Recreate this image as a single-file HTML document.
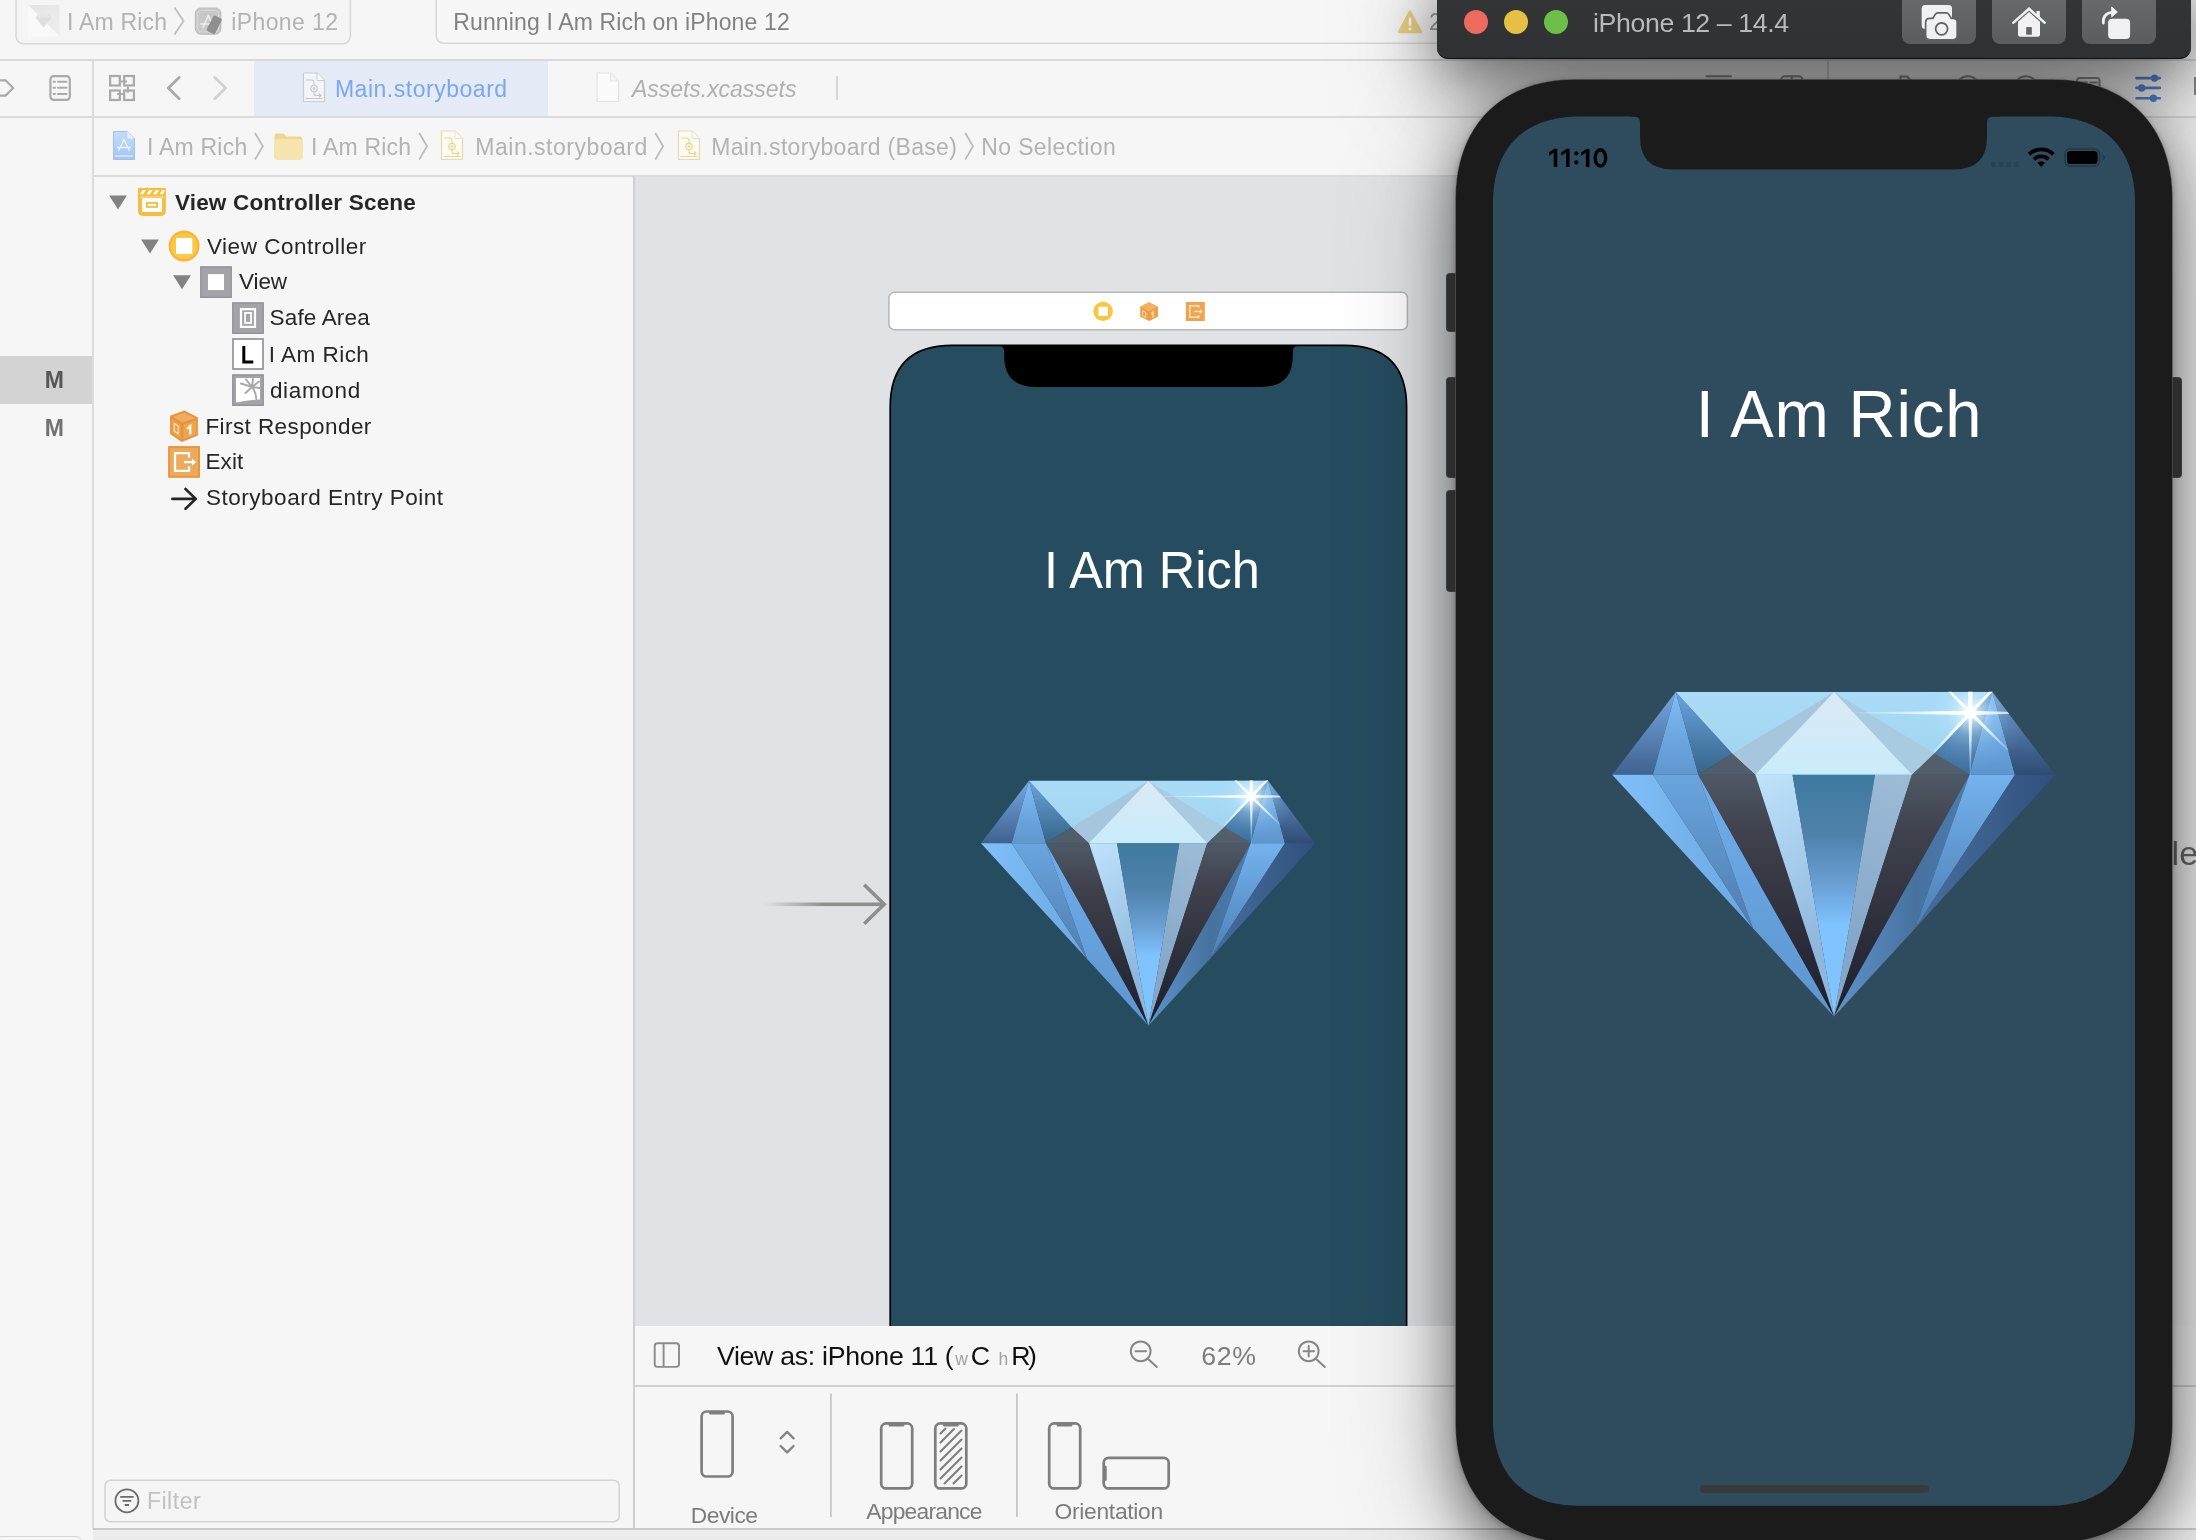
<!DOCTYPE html>
<html><head><meta charset="utf-8"><title>Xcode - I Am Rich</title>
<style>
html,body{margin:0;padding:0;background:#f6f6f6;}
body{width:2196px;height:1540px;overflow:hidden;font-family:"Liberation Sans",sans-serif;}
#root{will-change:transform;position:relative;width:2196px;height:1540px;overflow:hidden;background:#f6f6f6;}
.a{position:absolute;}
.t{position:absolute;white-space:pre;line-height:1;font-family:"Liberation Sans",sans-serif;}
svg{position:absolute;overflow:visible;}
.hl{position:absolute;background:#dadada;height:2px;}
.vl{position:absolute;background:#dadada;width:2px;}

</style></head>
<body>
<div id="root">
<!-- ===== Xcode window base ===== -->
<div class="a" style="left:0;top:0;width:2196px;height:59px;background:#f6f6f6"></div>
<!-- scheme box -->
<svg style="left:0;top:0" width="400" height="50" viewBox="0 0 400 50"><rect x="16.050" y="-10" width="334.300" height="53.850" rx="7.500" fill="#f5f5f5" stroke="#d8d8d8" stroke-width="1.500"/></svg>
<!-- status box -->
<svg style="left:430px;top:0" width="1300" height="50" viewBox="430 0 1300 50"><rect x="436.250" y="-10" width="1250" height="53.350" rx="7.500" fill="#f7f7f7" stroke="#d8d8d8" stroke-width="1.500"/></svg>
<!-- app icon (dimmed) -->
<svg style="left:28.200px;top:5px" width="32" height="32" viewBox="0 0 32 32">
  <defs><linearGradient id="ai" x1="0" y1="0" x2="1" y2="1"><stop offset="0" stop-color="#e4e4e4"/><stop offset="1" stop-color="#eeeeee"/></linearGradient></defs>
  <rect width="31.700" height="31.500" fill="#f9f9f9"/>
  <polygon points="0,0 31.700,0 31.700,31 " fill="url(#ai)"/>
  <polygon points="7.500,12.500 11,9 20,9 23.500,12.500 15.500,22.500" fill="#dfdfdf"/>
  <polygon points="11,9 20,9 21.500,12.500 9.500,12.500" fill="#e6e6e6"/>
  <polygon points="0,0 8.500,9.500 7.500,12.500 15.500,22.500 19.500,18.500 31.700,31 31.700,31.500 0,31.500" fill="#f9f9f9" fill-opacity="0"/>
</svg>
<!-- scheme chevron -->
<svg style="left:172px;top:6px" width="14" height="30" viewBox="0 0 14 30"><polyline points="2.500,1.500 11.500,15 2.500,28.500" fill="none" stroke="#bdbdbd" stroke-width="1.800"/></svg>
<!-- simulator icon -->
<svg style="left:194px;top:7px" width="32" height="32" viewBox="194 7 32 32">
  <rect x="195.300" y="8" width="25.600" height="26.200" rx="5.500" fill="#c8c8c8" stroke="#bababa" stroke-width="1"/>
  <rect x="197.600" y="10.300" width="21" height="21.600" rx="3.500" fill="none" stroke="#dadada" stroke-width="1"/>
  <path d="M203 27.500 L208.300 15.500 M213.500 27.500 L208.300 15.500 M200.500 24 H216" stroke="#ececec" stroke-width="1.600" fill="none" stroke-linecap="round"/>
  <rect x="209.600" y="16.200" width="9.400" height="17.300" rx="1.800" transform="rotate(27 214.300 24.800)" fill="#8f8f8f"/>
</svg>
<!-- warning -->
<svg style="left:1397px;top:9px" width="26" height="26" viewBox="0 0 26 26">
  <path d="M13 2.500 L24 23 H2 Z" fill="#ecd286" stroke="#ecd286" stroke-width="2.500" stroke-linejoin="round"/>
  <rect x="11.700" y="8.500" width="2.600" height="8.500" rx="1.200" fill="#fff"/><circle cx="13" cy="20" r="1.500" fill="#fff"/>
</svg>

<!-- horizontal separators -->
<div class="hl" style="left:0;top:58.500px;width:2196px;background:#d9d9d9"></div>
<div class="hl" style="left:0;top:116px;width:2196px;background:#dcdcdc"></div>
<div class="hl" style="left:93px;top:174.500px;width:2103px;background:#dcdcdc"></div>
<!-- selected tab -->
<div class="a" style="left:254px;top:60.500px;width:294px;height:55.500px;background:#e4eaf6"></div>
<!-- left strip -->
<div class="a" style="left:0;top:356px;width:92px;height:48px;background:#d3d3d3"></div>
<div class="vl" style="left:92.200px;top:60px;height:1469px;background:#dcdcdc"></div>

<!-- tab bar icons -->
<svg style="left:0;top:60px" width="260" height="56" viewBox="0 60 260 56">
  <g fill="none" stroke="#aaaaaa" stroke-width="2.200" stroke-linejoin="round" stroke-linecap="round">
    <path d="M-4 80.300 H5.500 L13.200 88 L5.500 95.600 H-4"/>
    <rect x="50.400" y="76.200" width="19.400" height="23.600" rx="3.200"/>
    <path d="M58 81.800 H66.500 M58 87.800 H66.500 M58 93.900 H66.500" stroke-width="2"/>
    <path d="M53.600 81.800 h1.400 M53.600 87.800 h1.400 M53.600 93.900 h1.400" stroke-width="2"/>
  </g>
  <g fill="none" stroke="#a9a9a9" stroke-width="2.200">
    <rect x="110.100" y="76" width="9.700" height="9.500"/><rect x="124.200" y="76" width="9.700" height="9.500"/>
    <rect x="110.100" y="90.500" width="9.700" height="9.500"/><rect x="124.200" y="90.500" width="9.700" height="9.500"/>
    <path d="M120.800 81.500 H127 M127.900 86.500 V92.700 M117.200 94 H123.100" stroke-width="2"/>
  </g>
  <polyline points="179.200,77.400 168.300,88 179.200,98.800" fill="none" stroke="#aaaaaa" stroke-width="2.800" stroke-linecap="round" stroke-linejoin="round"/>
  <polyline points="214.700,77.400 225.600,88 214.700,98.800" fill="none" stroke="#d2d2d2" stroke-width="2.800" stroke-linecap="round" stroke-linejoin="round"/>
</svg>
<!-- tab file icons -->
<svg style="left:302px;top:72px" width="24" height="31" viewBox="0 0 24 31">
  <path d="M1.500 1 H15 L22.500 8.500 V29.500 H1.500 Z" fill="#f3f5f9" stroke="#c9ccd2" stroke-width="1.200" stroke-linejoin="round"/>
  <path d="M15 1 V8.500 H22.500" fill="#fbfbfb" stroke="#c9ccd2" stroke-width="1" stroke-linejoin="round"/>
  <path d="M4 8 H9.500 Q12 8 12 10.500 V13" fill="none" stroke="#c3c6cc" stroke-width="1.100"/>
  <circle cx="12" cy="16.500" r="3.200" fill="none" stroke="#c3c6cc" stroke-width="1.100"/><circle cx="12" cy="16.500" r="1.200" fill="#c3c6cc"/>
  <path d="M12 20 V21.500 Q12 23.500 14 23.500 H19 M17 21.500 L19 23.500 L17 25.500 M3.500 26.500 H20.500" fill="none" stroke="#c3c6cc" stroke-width="1.100"/>
</svg>
<svg style="left:596px;top:72px" width="24" height="31" viewBox="0 0 24 31">
  <path d="M1 1 H14.500 L22.500 9 V29.500 H1 Z" fill="#fbfbfb" stroke="#e2e2e2" stroke-width="1.200" stroke-linejoin="round"/>
  <path d="M14.500 1 V9 H22.500" fill="#f4f4f4" stroke="#e2e2e2" stroke-width="1" stroke-linejoin="round"/>
</svg>
<div class="a" style="left:836px;top:75.500px;width:1.800px;height:24px;background:#d6d6d6"></div>

<!-- jump bar icons -->
<svg style="left:113px;top:131px" width="23" height="30" viewBox="0 0 23 30">
  <defs><linearGradient id="pj" x1="0" y1="0" x2="0" y2="1"><stop offset="0" stop-color="#c4dcf8"/><stop offset="1" stop-color="#a3c4f3"/></linearGradient></defs>
  <path d="M0.500 0.500 H14.500 L21.500 7.500 V28.500 H0.500 Z" fill="url(#pj)" stroke="#9fc0ee" stroke-width="1"/>
  <path d="M14.500 0.500 V7.500 H21.500 Z" fill="#e6f0fc"/>
  <path d="M5.500 20 L11 8.500 L16.500 20 M4 16.500 H18" fill="none" stroke="#e9f2fd" stroke-width="1.300"/>
  <path d="M2 25 H20" stroke="#e9f2fd" stroke-width="1.200"/>
</svg>
<svg style="left:274px;top:133px" width="29" height="27" viewBox="0 0 29 27">
  <path d="M0.500 3 Q0.500 0.500 3 0.500 H9.500 L12.500 3.500 H26 Q28.500 3.500 28.500 6 V24 Q28.500 26.500 26 26.500 H3 Q0.500 26.500 0.500 24 Z" fill="#efd791"/>
  <path d="M0.500 8 Q0.500 6 2.500 6 H26.500 Q28.500 6 28.500 8 V24 Q28.500 26.500 26 26.500 H3 Q0.500 26.500 0.500 24 Z" fill="#f6e4ae"/>
</svg>
<svg style="left:440px;top:130px" width="24" height="31" viewBox="0 0 24 31">
  <path d="M1.500 1 H15 L22.500 8.500 V29.500 H1.500 Z" fill="#fdfbf4" stroke="#ead9ab" stroke-width="1.200" stroke-linejoin="round"/>
  <path d="M15 1 V8.500 H22.500" fill="#fdfdfd" stroke="#e4e0d4" stroke-width="1" stroke-linejoin="round"/>
  <path d="M4 8 H9.500 Q12 8 12 10.500 V13" fill="none" stroke="#efd48d" stroke-width="1.200"/>
  <circle cx="12" cy="16.500" r="3.200" fill="none" stroke="#efd48d" stroke-width="1.200"/><circle cx="12" cy="16.500" r="1.200" fill="#efd48d"/>
  <path d="M12 20 V21.500 Q12 23.500 14 23.500 H19 M17 21.500 L19 23.500 L17 25.500 M3.500 26.500 H20.500" fill="none" stroke="#efd48d" stroke-width="1.200"/>
</svg>
<svg style="left:677px;top:130px" width="24" height="31" viewBox="0 0 24 31">
  <path d="M1.500 1 H15 L22.500 8.500 V29.500 H1.500 Z" fill="#fdfbf4" stroke="#ead9ab" stroke-width="1.200" stroke-linejoin="round"/>
  <path d="M15 1 V8.500 H22.500" fill="#fdfdfd" stroke="#e4e0d4" stroke-width="1" stroke-linejoin="round"/>
  <path d="M4 8 H9.500 Q12 8 12 10.500 V13" fill="none" stroke="#efd48d" stroke-width="1.200"/>
  <circle cx="12" cy="16.500" r="3.200" fill="none" stroke="#efd48d" stroke-width="1.200"/><circle cx="12" cy="16.500" r="1.200" fill="#efd48d"/>
  <path d="M12 20 V21.500 Q12 23.500 14 23.500 H19 M17 21.500 L19 23.500 L17 25.500 M3.500 26.500 H20.500" fill="none" stroke="#efd48d" stroke-width="1.200"/>
</svg>
<!-- jump bar chevrons -->
<svg style="left:0;top:117px" width="1200" height="58" viewBox="0 117 1200 58">
  <g fill="none" stroke="#bcbcbc" stroke-width="1.800">
    <polyline points="255,133 262.800,146.300 255,159.600"/>
    <polyline points="419.200,133 427,146.300 419.200,159.600"/>
    <polyline points="655.300,133 663.100,146.300 655.300,159.600"/>
    <polyline points="965.200,133 973,146.300 965.200,159.600"/>
  </g>
</svg>

<!-- inspector toolbar remnants (mostly hidden behind simulator) -->
<div class="vl" style="left:1826.500px;top:60px;height:57px;background:#d6d6d6"></div>
<svg style="left:1700px;top:70px" width="496" height="40" viewBox="1700 70 496 40">
  <g fill="none" stroke="#909090" stroke-width="2" stroke-linecap="round">
    <path d="M1706.500 76.200 H1731"/>
    <rect x="1781" y="76.200" width="21.500" height="20" rx="4"/>
    <path d="M1791.700 76.200 V96"/>
    <path d="M1900.500 100 V76.500 H1907 L1911 80.500 V100"/>
    <circle cx="1967.800" cy="88" r="11.800"/>
    <circle cx="2026" cy="88" r="11.800"/>
    <rect x="2077" y="78" width="22.500" height="20" rx="2.500"/>
    <path d="M2080 82.500 H2087 M2090.500 82.500 H2097"/>
  </g>
  <g stroke="#5585d0" stroke-width="2.600" stroke-linecap="round" fill="#5585d0">
    <path d="M2136.500 78.100 H2159.800 M2136.500 87.900 H2159.800 M2136.500 98.200 H2159.800"/>
    <circle cx="2154.600" cy="78.100" r="2.400"/><circle cx="2141.700" cy="87.900" r="2.400"/><circle cx="2153.400" cy="98.200" r="2.400"/>
  </g>
</svg>
<div class="a" style="left:2193.500px;top:76.500px;width:3px;height:18.500px;background:#8c8c8c"></div>

<!-- ===== diamond symbol ===== -->
<svg width="0" height="0" style="left:0;top:0">
  <defs>
    <linearGradient id="dFL" x1="0" y1="196" x2="0" y2="497" gradientUnits="userSpaceOnUse"><stop offset="0" stop-color="#76a6df"/><stop offset="1" stop-color="#3f6290"/></linearGradient>
    <linearGradient id="dL2" x1="0" y1="196" x2="0" y2="497" gradientUnits="userSpaceOnUse"><stop offset="0" stop-color="#7fbcf7"/><stop offset="1" stop-color="#5f96cd"/></linearGradient>
    <linearGradient id="dL3" x1="0" y1="196" x2="0" y2="497" gradientUnits="userSpaceOnUse"><stop offset="0" stop-color="#6ba3dd"/><stop offset="1" stop-color="#356489"/></linearGradient>
    <linearGradient id="dTab" x1="0" y1="196" x2="0" y2="497" gradientUnits="userSpaceOnUse"><stop offset="0" stop-color="#aadcf7"/><stop offset="1" stop-color="#9fd3ec"/></linearGradient>
    <linearGradient id="dKite" x1="0" y1="196" x2="0" y2="497" gradientUnits="userSpaceOnUse"><stop offset="0" stop-color="#dce9f5"/><stop offset="1" stop-color="#c9ecfb"/></linearGradient>
    <linearGradient id="dR3" x1="0" y1="196" x2="0" y2="497" gradientUnits="userSpaceOnUse"><stop offset="0" stop-color="#5f97cf"/><stop offset="1" stop-color="#3d6d98"/></linearGradient>
    <linearGradient id="dR2" x1="0" y1="196" x2="0" y2="497" gradientUnits="userSpaceOnUse"><stop offset="0" stop-color="#7bb5ee"/><stop offset="1" stop-color="#5d95cf"/></linearGradient>
    <linearGradient id="dFR" x1="0" y1="196" x2="0" y2="497" gradientUnits="userSpaceOnUse"><stop offset="0" stop-color="#6796cc"/><stop offset="1" stop-color="#2f4b74"/></linearGradient>
    <linearGradient id="dDk" x1="0" y1="420" x2="0" y2="1375" gradientUnits="userSpaceOnUse"><stop offset="0" stop-color="#55626f"/><stop offset="0.300" stop-color="#3f414d"/><stop offset="1" stop-color="#1d1e2b"/></linearGradient>
    <linearGradient id="dCen" x1="0" y1="497" x2="0" y2="1375" gradientUnits="userSpaceOnUse"><stop offset="0" stop-color="#3f7a9f"/><stop offset="0.250" stop-color="#4f82ab"/><stop offset="0.450" stop-color="#6a9fd3"/><stop offset="0.620" stop-color="#7fc3ff"/><stop offset="1" stop-color="#80c4ff"/></linearGradient>
    <linearGradient id="dPL" x1="717" y1="497" x2="1003" y2="1100" gradientUnits="userSpaceOnUse"><stop offset="0" stop-color="#bfe3fb"/><stop offset="1" stop-color="#8fb6dc"/></linearGradient>
    <linearGradient id="dPR" x1="1286" y1="497" x2="1003" y2="1100" gradientUnits="userSpaceOnUse"><stop offset="0" stop-color="#9cbcd6"/><stop offset="1" stop-color="#86a6c9"/></linearGradient>
    <linearGradient id="dOL" x1="197" y1="0" x2="720" y2="0" gradientUnits="userSpaceOnUse"><stop offset="0" stop-color="#80c0fa"/><stop offset="1" stop-color="#6ca6e0"/></linearGradient>
    <linearGradient id="dOL2" x1="0" y1="497" x2="0" y2="1055" gradientUnits="userSpaceOnUse"><stop offset="0" stop-color="#6aa5df"/><stop offset="1" stop-color="#4f7db0"/></linearGradient>
    <linearGradient id="dOL3" x1="0" y1="497" x2="0" y2="1375" gradientUnits="userSpaceOnUse"><stop offset="0" stop-color="#6fadea"/><stop offset="1" stop-color="#5d95cf"/></linearGradient>
    <linearGradient id="dOR" x1="1300" y1="0" x2="1805" y2="0" gradientUnits="userSpaceOnUse"><stop offset="0" stop-color="#486f9f"/><stop offset="1" stop-color="#30507c"/></linearGradient>
    <linearGradient id="dOR2" x1="0" y1="497" x2="0" y2="1055" gradientUnits="userSpaceOnUse"><stop offset="0" stop-color="#74b2ee"/><stop offset="1" stop-color="#4c7fb4"/></linearGradient>
    <linearGradient id="dOR3" x1="1003" y1="0" x2="1495" y2="0" gradientUnits="userSpaceOnUse"><stop offset="0" stop-color="#5e93cb"/><stop offset="0.600" stop-color="#47729f"/><stop offset="1" stop-color="#4b7cb0"/></linearGradient>
    <radialGradient id="dGlow" cx="1498" cy="272" r="210" gradientUnits="userSpaceOnUse"><stop offset="0" stop-color="#ffffff" stop-opacity="0.950"/><stop offset="0.150" stop-color="#e8f8ff" stop-opacity="0.700"/><stop offset="0.400" stop-color="#bfe8ff" stop-opacity="0.300"/><stop offset="0.700" stop-color="#a0d8ff" stop-opacity="0.100"/><stop offset="1" stop-color="#8fd0ff" stop-opacity="0"/></radialGradient>
    <linearGradient id="dStH" x1="1000" y1="0" x2="1660" y2="0" gradientUnits="userSpaceOnUse"><stop offset="0" stop-color="#dff6ff" stop-opacity="0"/><stop offset="0.250" stop-color="#dff6ff" stop-opacity="0.550"/><stop offset="0.600" stop-color="#fff" stop-opacity="0.950"/><stop offset="0.760" stop-color="#fff" stop-opacity="1"/><stop offset="1" stop-color="#d8f4ff" stop-opacity="0.750"/></linearGradient>
    <linearGradient id="dStV" x1="0" y1="188" x2="0" y2="520" gradientUnits="userSpaceOnUse"><stop offset="0" stop-color="#fff" stop-opacity="0.900"/><stop offset="0.250" stop-color="#fff" stop-opacity="1"/><stop offset="0.550" stop-color="#dff4ff" stop-opacity="0.850"/><stop offset="1" stop-color="#9fd8ff" stop-opacity="0.100"/></linearGradient>
    <linearGradient id="dRay1" x1="1417" y1="195" x2="1634" y2="406" gradientUnits="userSpaceOnUse"><stop offset="0" stop-color="#fff" stop-opacity="0.950"/><stop offset="0.370" stop-color="#fff" stop-opacity="1"/><stop offset="0.700" stop-color="#e6f7ff" stop-opacity="0.850"/><stop offset="1" stop-color="#bfe6ff" stop-opacity="0.350"/></linearGradient>
    <linearGradient id="dRay2" x1="1578" y1="195" x2="1366" y2="416" gradientUnits="userSpaceOnUse"><stop offset="0" stop-color="#fff" stop-opacity="0.950"/><stop offset="0.360" stop-color="#fff" stop-opacity="1"/><stop offset="0.750" stop-color="#e6f7ff" stop-opacity="0.900"/><stop offset="1" stop-color="#c6eaff" stop-opacity="0.550"/></linearGradient>
    <radialGradient id="dCore" cx="1498" cy="272" r="27" gradientUnits="userSpaceOnUse"><stop offset="0" stop-color="#fff" stop-opacity="1"/><stop offset="0.550" stop-color="#fff" stop-opacity="0.950"/><stop offset="1" stop-color="#fff" stop-opacity="0"/></radialGradient>
    <filter id="dBlur" x="-5%" y="-5%" width="110%" height="110%"><feGaussianBlur stdDeviation="2.200"/></filter>
    <clipPath id="dClip"><polygon points="428,194 1578,194 1805,497 1003,1375 197,497"/></clipPath>
    <symbol id="diamond" viewBox="0 0 2021 1540">
      <g stroke-linejoin="round">
      <!-- crown -->
      <polygon points="197,497 428,196 345,497" fill="url(#dFL)"/>
      <polygon points="428,196 345,497 510,497" fill="url(#dL2)"/>
      <polygon points="428,196 510,497 633,420" fill="url(#dL3)"/>
      <polygon points="428,196 1578,196 1367,420 1286,497 717,497 633,420" fill="url(#dTab)"/>
      <polygon points="1003,197 633,420 717,497" fill="#a6c6de"/>
      <polygon points="1003,197 1367,420 1286,497" fill="#a9cbe2"/>
      <polygon points="1003,197 717,497 1286,497" fill="url(#dKite)"/>
      <polygon points="1578,196 1367,420 1495,497" fill="url(#dR3)"/>
      <polygon points="1578,196 1495,497 1660,497" fill="url(#dR2)"/>
      <polygon points="1578,196 1660,497 1805,497" fill="url(#dFR)"/>
      <polygon points="633,420 510,497 717,497" fill="#515d6a"/>
      <polygon points="1367,420 1286,497 1495,497" fill="#535e6b"/>
      <!-- pavilion -->
      <polygon points="197,497 345,497 709,1055" fill="url(#dOL)"/>
      <polygon points="345,497 510,497 709,1055" fill="url(#dOL2)"/>
      <polygon points="510,497 709,1055 1003,1375" fill="url(#dOL3)"/>
      <polygon points="510,497 717,497 1003,1375" fill="url(#dDk)"/>
      <polygon points="717,497 852,497 1003,1375" fill="url(#dPL)"/>
      <polygon points="852,497 1152,497 1003,1375" fill="url(#dCen)"/>
      <polygon points="1152,497 1286,497 1003,1375" fill="url(#dPR)"/>
      <polygon points="1286,497 1495,497 1003,1375" fill="url(#dDk)"/>
      <polygon points="1495,497 1297,1055 1003,1375" fill="url(#dOR3)"/>
      <polygon points="1495,497 1660,497 1297,1055" fill="url(#dOR2)"/>
      <polygon points="1660,497 1805,497 1297,1055" fill="url(#dOR)"/>
      <!-- sparkle -->
      <g clip-path="url(#dClip)">
        <circle cx="1498" cy="272" r="210" fill="url(#dGlow)"/>
        <g filter="url(#dBlur)">
          <polygon points="1000,272 1498,264.500 1660,268.500 1660,275.500 1498,279.500" fill="url(#dStH)"/>
          <polygon points="1490,188 1506,188 1505,272 1499.500,520 1496.500,520 1491,272" fill="url(#dStV)"/>
          <polygon points="1412,188 1422,188 1503,267 1636,404 1632,408 1493,277" fill="url(#dRay1)"/>
          <polygon points="1573,188 1584,190 1503,277 1369,418 1363,412 1493,267" fill="url(#dRay2)"/>
        </g>
        <circle cx="1498" cy="272" r="27" fill="url(#dCore)"/>
      </g>
      </g>
    </symbol>
  </defs>
</svg>

<!-- ===== canvas ===== -->
<div class="a" style="left:634px;top:176.500px;width:1562px;height:1149.500px;background:#e1e2e6"></div>
<div class="vl" style="left:632.500px;top:176px;height:1353px;background:#cfcfcf"></div>
<div class="a" style="left:1828px;top:118px;width:368px;height:1412px;background:#f4f4f4"></div>
<!-- scene dock -->
<svg style="left:880px;top:285px" width="540" height="52" viewBox="880 285 540 52"><rect x="888.900" y="292.300" width="518.500" height="37.400" rx="5.500" fill="#fff" stroke="#b7b7b7" stroke-width="1.500"/></svg>
<svg style="left:1090px;top:298px" width="120" height="28" viewBox="1090 298 120 28">
  <circle cx="1103.100" cy="311.400" r="9.700" fill="#f7c740"/>
  <rect x="1098.500" y="306.800" width="9.200" height="9.200" rx="0.500" fill="#fff"/>
  <polygon points="1149,302.300 1157.800,306.800 1157.800,316.400 1149,321.100 1140.200,316.400 1140.200,306.800" fill="#ee9e44"/>
  <polygon points="1149,302.300 1157.800,306.800 1149,311.300 1140.200,306.800" fill="#f2b264"/>
  <polygon points="1149,311.300 1157.800,306.800 1157.800,316.400 1149,321.100" fill="#ef9f45"/>
  <polygon points="1142.600,310.800 1145.800,312.400 1145.800,317.600 1142.600,316" fill="none" stroke="#f9d9ae" stroke-width="1"/>
  <path d="M1151.200 314 L1153.100 312 V317.600" fill="none" stroke="#fbe6cc" stroke-width="1.300"/>
  <rect x="1185.800" y="302" width="19" height="19" fill="#efa550"/>
  <path d="M1198.600 308 V305.800 H1189.800 V317.200 H1198.600 V315" fill="none" stroke="#fbe3c4" stroke-width="1.500"/>
  <path d="M1194 311.500 H1201.500" fill="none" stroke="#fbe3c4" stroke-width="1.400"/>
  <polygon points="1199.800,309 1202.600,311.500 1199.800,314" fill="#fbe3c4"/>
</svg>
<!-- storyboard phone -->
<svg style="left:880px;top:340px" width="540" height="1000" viewBox="880 340 540 1000">
  <path d="M890.200 1450 V407.400 C890.200 366.400 911.200 345.400 952.200 345.400 H1344.600 C1385.600 345.400 1406.600 366.400 1406.600 407.400 V1450 Z" fill="#264c5f" stroke="#000" stroke-width="1.700"/>
</svg>
<svg style="left:990px;top:340px" width="320" height="50" viewBox="990 340 320 50">
  <path d="M996 346 H999 Q1004.200 346 1004.200 351.500 V356 Q1004.200 387 1036 387 H1261 Q1292.800 387 1292.800 356 V351.500 Q1292.800 346 1298 346 H1301 V345.700 H996 Z" fill="#000"/>
</svg>
<!-- entry arrow -->
<svg style="left:760px;top:880px" width="130" height="50" viewBox="760 880 130 50">
  <defs><linearGradient id="arw" x1="764" y1="0" x2="886" y2="0" gradientUnits="userSpaceOnUse"><stop offset="0" stop-color="#8e8e8e" stop-opacity="0"/><stop offset="0.500" stop-color="#8e8e8e" stop-opacity="1"/><stop offset="1" stop-color="#8e8e8e"/></linearGradient></defs>
  <rect x="764" y="902.500" width="120" height="3.600" fill="url(#arw)"/>
  <polyline points="864.200,884.800 884.200,904.300 864.200,923.800" fill="none" stroke="#8e8e8e" stroke-width="3.600" stroke-linejoin="miter"/>
</svg>
<!-- storyboard diamond -->
<svg style="left:940px;top:740px" width="420" height="320"><use href="#diamond" width="420" height="320"/></svg>

<!-- ===== document outline icons ===== -->
<svg style="left:94px;top:176px" width="400" height="350" viewBox="94 176 400 350">
  <!-- disclosure triangles -->
  <g fill="#828282">
    <polygon points="109.200,195.400 126.900,195.400 118,209.400"/>
    <polygon points="141.100,239.500 158.900,239.500 150,253.500"/>
    <polygon points="173.100,275.300 190.900,275.300 182,289.300"/>
  </g>
  <!-- scene icon -->
  <path d="M138 189 Q138 188 139 188 H164.900 Q165.900 188 165.900 189 V211 Q165.900 215.900 161 215.900 H142.900 Q138 215.900 138 211 Z" fill="#f5be40"/>
  <rect x="142" y="198" width="20" height="14" fill="#fff"/>
  <rect x="139.600" y="195.800" width="24.700" height="2.200" fill="#f8cf6a"/>
  <g fill="#fff"><polygon points="139.800,194.300 142.600,190 146,190 143.200,194.300"/><polygon points="146.400,194.300 149.200,190 152.600,190 149.800,194.300"/><polygon points="153,194.300 155.800,190 159.200,190 156.400,194.300"/><polygon points="159.600,194.300 162.400,190 164.300,190 164.300,192 162.800,194.300"/></g>
  <rect x="146.900" y="202.900" width="10.100" height="4" fill="#fff" stroke="#f5be40" stroke-width="1.900"/>
  <!-- view controller icon -->
  <circle cx="184.100" cy="246" r="14.300" fill="#f9c845" stroke="#f5b83a" stroke-width="2.400"/>
  <rect x="176" y="238" width="16.300" height="16" rx="0.800" fill="#fff"/>
  <!-- view icon -->
  <rect x="200.800" y="266.900" width="30.400" height="30.400" fill="#a3a3a8" stroke="#919196" stroke-width="1.400"/>
  <rect x="208" y="274.100" width="16" height="16" fill="#fff"/>
  <!-- safe area icon -->
  <rect x="232.800" y="302.900" width="30.400" height="30.400" fill="#a3a3a8" stroke="#919196" stroke-width="1.400"/>
  <rect x="241" y="309.200" width="14" height="17.700" fill="#a3a3a8" stroke="#fff" stroke-width="2.200"/>
  <rect x="245.100" y="312.900" width="6" height="10" fill="#a3a3a8" stroke="#fff" stroke-width="1.800"/>
  <!-- label icon -->
  <rect x="233" y="339" width="30" height="30" fill="#fff" stroke="#98989d" stroke-width="1.800"/>
  <path d="M243.800 346 V362 H253.300" fill="none" stroke="#000" stroke-width="3"/>
  <!-- image view icon -->
  <rect x="232.800" y="374.900" width="30.400" height="30.400" fill="#a3a3a8" stroke="#919196" stroke-width="1.400"/>
  <path d="M236 378 H260 V399.500 Q248 400 236 402.500 Z" fill="#fff"/>
  <g stroke="#a8a8ad" stroke-width="2" stroke-linecap="round" fill="none">
    <path d="M252 387 L241 383.500 M252 387 L246 379.500 M252 387 L253 379 M252 387 L259 381.500 M252 387 L260 388 M252 387 L245.500 393 M252 387 Q256 392 256.500 400"/>
  </g>
  <!-- first responder cube -->
  <polygon points="184.500,410.600 197.900,417.600 197.900,435.600 181.800,442 170.100,434 170.100,415.700" fill="#e8933a"/>
  <polygon points="184.300,412.700 195.300,418.300 182.300,422.600 173.200,416.800" fill="#f0ae62"/>
  <polygon points="171.800,418.300 181,424.600 181,439.300 171.800,433.200" fill="#ed9f49"/>
  <polygon points="183.500,424.600 196.200,420.200 196.200,434.400 183.500,439.400" fill="#eea552"/>
  <polygon points="174.300,423.600 178.300,426.300 178.300,433.800 174.300,431.100" fill="none" stroke="#fbe5c8" stroke-width="1.200"/>
  <path d="M187.200 428.800 L190.300 426 V434.600" fill="none" stroke="#fff" stroke-width="2"/>
  <!-- exit icon -->
  <rect x="168.100" y="446.100" width="31.900" height="31.700" fill="#e8953d"/>
  <rect x="170.100" y="448.100" width="27.900" height="27.700" fill="#eeaa5c"/>
  <path d="M189 457.500 V453.200 H175 V470.900 H189 V466.500" fill="none" stroke="#fff" stroke-width="2.300"/>
  <path d="M184 462.100 H193" fill="none" stroke="#fff" stroke-width="2.300"/>
  <polygon points="192,458.400 196,462.100 192,465.800" fill="#fff"/>
  <!-- entry point arrow -->
  <path d="M172.400 498.900 H195.500 M185.500 489 L195.800 498.900 L185.500 508.800" fill="none" stroke="#262626" stroke-width="2.600" stroke-linecap="round" stroke-linejoin="round"/>
</svg>
<!-- filter box -->
<svg style="left:100px;top:1475px" width="530" height="52" viewBox="100 1475 530 52"><rect x="104.950" y="1480.250" width="514.300" height="41.500" rx="5.500" fill="#f5f5f5" stroke="#d3d3d3" stroke-width="1.500"/></svg>
<svg style="left:112px;top:1486px" width="30" height="30" viewBox="112 1486 30 30">
  <circle cx="126.900" cy="1500.800" r="11.500" fill="none" stroke="#6b6b6b" stroke-width="1.800"/>
  <path d="M120.200 1496.800 H133.600 M122.500 1500.900 H131.300 M124.700 1505 H129.100" stroke="#6b6b6b" stroke-width="1.800" fill="none"/>
</svg>

<!-- ===== canvas bottom bars ===== -->
<div class="a" style="left:634.500px;top:1326px;width:1562px;height:202px;background:#f6f6f6"></div>
<div class="hl" style="left:634.500px;top:1384.500px;width:1562px;background:#d2d2d2"></div>
<div class="hl" style="left:93px;top:1527.500px;width:2103px;background:#c9c9c9;height:2.200px"></div>
<div class="a" style="left:93px;top:1529.700px;width:2103px;height:11px;background:#ececec"></div>
<div class="a" style="left:-4px;top:1535.500px;width:84px;height:10px;border:1.500px solid #d6d6d6;border-radius:6px"></div>
<svg style="left:634px;top:1326px" width="820" height="204" viewBox="634 1326 820 204">
  <!-- sidebar toggle -->
  <g fill="none" stroke="#8b8b8b" stroke-width="1.900">
    <rect x="654.700" y="1343.300" width="24.300" height="23.600" rx="2.800"/>
    <path d="M663.600 1343.300 V1366.900"/>
  </g>
  <!-- zoom icons -->
  <g fill="none" stroke="#868686" stroke-width="2" stroke-linecap="round">
    <circle cx="1140.700" cy="1351.300" r="9.900"/><path d="M1147.900 1358.700 L1156.800 1367"/><path d="M1135.500 1351.300 H1146"/>
    <circle cx="1308.700" cy="1351.300" r="9.900"/><path d="M1315.900 1358.700 L1324.800 1367"/><path d="M1303.500 1351.300 H1314 M1308.700 1346 V1356.600"/>
  </g>
  <!-- dividers -->
  <rect x="830" y="1393.600" width="1.800" height="123.400" fill="#c6c6c6"/>
  <rect x="1016" y="1393.600" width="1.800" height="123.400" fill="#c6c6c6"/>
  <!-- device phones -->
  <g fill="none" stroke="#7e7e7e" stroke-width="2.700">
    <rect x="701.600" y="1411.500" width="31" height="65" rx="5"/>
    <rect x="881.200" y="1423.400" width="31" height="65" rx="5"/>
    <rect x="935.300" y="1423.400" width="31" height="65" rx="5"/>
    <rect x="1049.200" y="1423.400" width="31" height="65" rx="5"/>
    <rect x="1103.700" y="1457.800" width="65" height="30.600" rx="5"/>
  </g>
  <g stroke="#7e7e7e" stroke-width="3" stroke-linecap="round">
    <path d="M710.500 1413 H723.500 M890 1425 H903 M944.300 1425 H957.300 M1058 1425 H1071 M1105.200 1467 V1479.500"/>
  </g>
  <!-- hatching -->
  <g stroke="#7e7e7e" stroke-width="2.100" stroke-linecap="round">
    <path d="M940.500 1433.500 L945.500 1428.500 M940.500 1442.500 L954 1429 M940.500 1451.500 L961.500 1430.500 M940.500 1460.500 L961.500 1439.500 M940.500 1469.500 L961.500 1448.500 M940.500 1478.500 L961.500 1457.500 M944.500 1483.500 L961.500 1466.500 M953.500 1483.500 L961.500 1475.500"/>
  </g>
  <!-- up/down chevrons -->
  <g fill="none" stroke="#858585" stroke-width="2.400" stroke-linecap="round" stroke-linejoin="round">
    <polyline points="780.600,1438.300 787.100,1431.900 793.600,1438.300"/>
    <polyline points="780.600,1446 787.100,1452.400 793.600,1446"/>
  </g>
</svg>
<span class="t" style="left:66.97px;top:10.53px;font-size:23px;color:#b3b3b3;letter-spacing:0.205px;">I Am Rich</span>
<span class="t" style="left:231.34px;top:10.53px;font-size:23px;color:#b3b3b3;letter-spacing:0.376px;">iPhone 12</span>
<span class="t" style="left:453.22px;top:11.23px;font-size:23px;color:#828282;letter-spacing:0.139px;">Running I Am Rich on iPhone 12</span>
<span class="t" style="left:1428.94px;top:11.23px;font-size:23px;color:#9a9a9a;">2</span>
<span class="t" style="left:334.92px;top:77.63px;font-size:23px;color:#7aa8ef;letter-spacing:0.525px;">Main.storyboard</span>
<span class="t" style="left:631.96px;top:77.63px;font-size:23px;color:#b0b0b0;letter-spacing:-0.032px;font-style:italic;">Assets.xcassets</span>
<span class="t" style="left:147.12px;top:135.63px;font-size:23px;color:#b3b3b3;letter-spacing:0.209px;">I Am Rich</span>
<span class="t" style="left:311.12px;top:135.63px;font-size:23px;color:#b3b3b3;letter-spacing:0.194px;">I Am Rich</span>
<span class="t" style="left:475.34px;top:135.63px;font-size:23px;color:#b3b3b3;letter-spacing:0.500px;">Main.storyboard</span>
<span class="t" style="left:711.28px;top:135.63px;font-size:23px;color:#b3b3b3;letter-spacing:0.313px;">Main.storyboard (Base)</span>
<span class="t" style="left:981.22px;top:135.63px;font-size:23px;color:#b3b3b3;letter-spacing:0.377px;">No Selection</span>
<span class="t" style="left:174.93px;top:191.55px;font-size:22.5px;color:#262626;letter-spacing:0.185px;font-weight:700;">View Controller Scene</span>
<span class="t" style="left:207.01px;top:235.65px;font-size:22.5px;color:#262626;letter-spacing:0.508px;">View Controller</span>
<span class="t" style="left:239.07px;top:271.35px;font-size:22.5px;color:#262626;letter-spacing:-0.138px;">View</span>
<span class="t" style="left:269.55px;top:307.35px;font-size:22.5px;color:#262626;letter-spacing:0.170px;">Safe Area</span>
<span class="t" style="left:268.74px;top:343.55px;font-size:22.5px;color:#262626;letter-spacing:0.485px;">I Am Rich</span>
<span class="t" style="left:269.92px;top:379.55px;font-size:22.5px;color:#262626;letter-spacing:0.657px;">diamond</span>
<span class="t" style="left:205.43px;top:415.55px;font-size:22.5px;color:#262626;letter-spacing:0.417px;">First Responder</span>
<span class="t" style="left:205.43px;top:451.25px;font-size:22.5px;color:#262626;letter-spacing:0.129px;">Exit</span>
<span class="t" style="left:206.07px;top:487.35px;font-size:22.5px;color:#262626;letter-spacing:0.505px;">Storyboard Entry Point</span>
<span class="t" style="left:44.86px;top:369.23px;font-size:23px;color:#565656;font-weight:700;">M</span>
<span class="t" style="left:44.86px;top:417.43px;font-size:23px;color:#727272;font-weight:700;">M</span>
<span class="t" style="left:146.92px;top:1490.43px;font-size:23px;color:#c2c2c2;letter-spacing:0.523px;">Filter</span>
<span class="t" style="left:716.88px;top:1343.00px;font-size:26.7px;color:#111;letter-spacing:-0.287px;">View as: iPhone 11 (</span>
<span class="t" style="left:955.23px;top:1350.79px;font-size:17.5px;color:#a2a2a2;">w</span>
<span class="t" style="left:970.68px;top:1343.00px;font-size:26.7px;color:#111;">C</span>
<span class="t" style="left:998.41px;top:1350.79px;font-size:17.5px;color:#a2a2a2;">h</span>
<span class="t" style="left:1011.30px;top:1343.00px;font-size:26.7px;color:#111;letter-spacing:-2.603px;">R)</span>
<span class="t" style="left:1201.32px;top:1343.00px;font-size:26.7px;color:#7d7d7d;letter-spacing:0.592px;">62%</span>
<span class="t" style="left:690.80px;top:1503.90px;font-size:22.8px;color:#7c7c7c;letter-spacing:-0.491px;">Device</span>
<span class="t" style="left:866.28px;top:1500.20px;font-size:22.8px;color:#7c7c7c;letter-spacing:-0.753px;">Appearance</span>
<span class="t" style="left:1054.56px;top:1500.20px;font-size:22.8px;color:#7c7c7c;letter-spacing:-0.289px;">Orientation</span>
<span class="t" style="left:2171.62px;top:836.02px;font-size:34px;color:#6a6a6a;">le</span>
<span class="t" style="left:1044.06px;top:546.05px;font-size:50.5px;color:#fff;letter-spacing:-0.050px;transform:scaleY(1.015);transform-origin:0 84.65%;">I Am Rich</span>

<!-- ===== iOS Simulator window ===== -->
<!-- soft window shadow -->
<div class="a" style="left:1466px;top:90px;width:696px;height:1443px;border-radius:100px;box-shadow:0 20px 60px 10px rgba(0,0,0,0.50), 0 22px 120px 10px rgba(0,0,0,0.27), 0 1px 6px 10px rgba(0,0,0,0.28);"></div>
<div class="a" style="left:1441px;top:-20px;width:745px;height:74px;border-radius:8px;box-shadow:0 20px 60px 4px rgba(0,0,0,0.50), 0 22px 120px 4px rgba(0,0,0,0.27);"></div>
<!-- side buttons -->
<div class="a" style="left:1445.500px;top:273px;width:14px;height:58.500px;border-radius:3.500px;background:#2d2d2d;border:1px solid #3b3b3b;box-sizing:border-box"></div>
<div class="a" style="left:1445.500px;top:376.800px;width:14px;height:101.500px;border-radius:3.500px;background:#2d2d2d;border:1px solid #3b3b3b;box-sizing:border-box"></div>
<div class="a" style="left:1445.500px;top:490px;width:14px;height:102px;border-radius:3.500px;background:#2d2d2d;border:1px solid #3b3b3b;box-sizing:border-box"></div>
<div class="a" style="left:2168px;top:377px;width:13.600px;height:101.300px;border-radius:3.500px;background:#2d2d2d;border:1px solid #3b3b3b;box-sizing:border-box"></div>
<!-- phone body -->
<svg style="left:1440px;top:70px" width="750" height="1480" viewBox="1440 70 750 1480">
  <path d="M1455.500 199.300 C1455.500 125.300 1501.500 79.300 1575.500 79.300 H2052.500 C2126.500 79.300 2172.500 125.300 2172.500 199.300 V1423 C2172.500 1497 2126.500 1543 2052.500 1543 H1575.500 C1501.500 1543 1455.500 1497 1455.500 1423 Z" fill="#1b1b1b" stroke="#8a8a8a" stroke-opacity="0.35" stroke-width="1"/>
  <path d="M1493 202.500 C1493 147.800 1524.300 116.500 1579 116.500 H2049 C2103.700 116.500 2135 147.800 2135 202.500 V1419.700 C2135 1474.400 2103.700 1505.700 2049 1505.700 H1579 C1524.300 1505.700 1493 1474.400 1493 1419.700 Z" fill="#2f4c5e"/>
</svg>
<!-- notch -->
<svg style="left:1630px;top:110px" width="370" height="64" viewBox="1630 110 370 64">
  <path d="M1630 110 H2000 V116.500 H1993 Q1987 116.500 1987 122.500 V137 Q1987 169.500 1954 169.500 H1673 Q1640 169.500 1640 137 V122.500 Q1640 116.500 1634 116.500 H1630 Z" fill="#1b1b1b"/>
</svg>
<!-- status icons -->
<svg style="left:1985px;top:140px" width="130" height="34" viewBox="1985 140 130 34">
  <g fill="#294252"><rect x="1991" y="161.800" width="4.800" height="5.100" rx="1.300"/><rect x="1998.500" y="161.800" width="4.800" height="5.100" rx="1.300"/><rect x="2006" y="161.800" width="4.800" height="5.100" rx="1.300"/><rect x="2013.800" y="161.800" width="4.900" height="5.100" rx="1.300"/></g>
  <g fill="none" stroke="#000" stroke-linecap="butt">
    <path d="M2029.040 154.310 A17.500 17.500 0 0 1 2053.360 154.310" stroke-width="3.800"/>
    <path d="M2033.870 159.310 A10.550 10.550 0 0 1 2048.530 159.310" stroke-width="3.700"/>
  </g>
  <path d="M2041.200 166.900 L2037.240 162.800 A5.700 5.700 0 0 1 2045.160 162.800 Z" fill="#000"/>
  <rect x="2065.100" y="148.900" width="34.500" height="17.200" rx="4.800" fill="none" stroke="#223a4a" stroke-width="1.700"/>
  <rect x="2067" y="151" width="30.600" height="13" rx="3.300" fill="#000"/>
  <path d="M2102.700 154.800 Q2105 155.800 2105 157.500 Q2105 159.200 2102.700 160.200 Z" fill="#223a4a"/>
</svg>
<!-- clock glyphs -->
<svg style="left:1540px;top:140px" width="80" height="34" viewBox="1540 140 80 34">
  <g fill="#000">
  <polygon points="1557.3,148.800 1554.5,148.800 1549.0,152.300 1549.0,155.700 1553.7,152.700 1553.7,167 1557.3,167"/>
  <polygon points="1569.6,148.800 1566.8,148.800 1561.3,152.300 1561.3,155.700 1566.0,152.700 1566.0,167 1569.6,167"/>
  <polygon points="1589.5,148.800 1586.7,148.800 1581.2,152.300 1581.2,155.700 1585.9,152.700 1585.9,167 1589.5,167"/>
  <circle cx="1576.300" cy="153.300" r="2.150"/><circle cx="1576.300" cy="162.400" r="2.150"/>
  </g>
  <ellipse cx="1600.400" cy="157.900" rx="5.300" ry="8.150" fill="none" stroke="#000" stroke-width="3.400"/>
</svg>
<!-- sim diamond -->
<svg style="left:1558.200px;top:637.600px" width="556.300" height="423.900"><use href="#diamond" width="556.300" height="423.900"/></svg>
<!-- home indicator -->
<div class="a" style="left:1700px;top:1484.500px;width:229px;height:8.200px;border-radius:4.100px;background:#3a3a3a"></div>

<!-- title bar -->
<div class="a" style="left:1437px;top:-20px;width:753.500px;height:78.500px;border-radius:11px;background:linear-gradient(#353638,#2f3032);border-bottom:1.500px solid #111;box-sizing:border-box"></div>
<div class="a" style="left:1464px;top:10px;width:24px;height:24px;border-radius:12px;background:#ec6a5e"></div>
<div class="a" style="left:1504px;top:10px;width:24px;height:24px;border-radius:12px;background:#e6c044"></div>
<div class="a" style="left:1544px;top:10px;width:24px;height:24px;border-radius:12px;background:#6cc04a"></div>
<!-- title buttons -->
<div class="a" style="left:1902px;top:-8px;width:74px;height:52px;border-radius:8px;background:linear-gradient(#6a6b6d,#5b5c5e)"></div>
<div class="a" style="left:1992px;top:-8px;width:74px;height:52px;border-radius:8px;background:linear-gradient(#6a6b6d,#5b5c5e)"></div>
<div class="a" style="left:2082px;top:-8px;width:74px;height:52px;border-radius:8px;background:linear-gradient(#6a6b6d,#5b5c5e)"></div>
<svg style="left:1900px;top:0" width="260" height="46" viewBox="1900 0 260 46">
  <!-- screenshot -->
  <rect x="1921.700" y="5" width="30.300" height="24" rx="3.500" fill="#f1f1f3"/>
  <path d="M1929.800 38.900 Q1926.500 38.900 1926.500 35.600 V22.500 Q1926.500 19.200 1929.800 19.200 H1933.300 L1936 14.800 Q1936.600 13.800 1937.800 13.800 H1946.300 Q1947.500 13.800 1948.100 14.800 L1950.800 19.200 H1953 Q1956.300 19.200 1956.300 22.500 V35.600 Q1956.300 38.900 1953 38.900 Z" fill="#f1f1f3" stroke="#636466" stroke-width="3.400" paint-order="stroke"/>
  <circle cx="1941.600" cy="28.800" r="6" fill="none" stroke="#5e5f61" stroke-width="1.700"/>
  <!-- home -->
  <path d="M2013.400 22.600 L2029 8.800 L2044.600 22.600" fill="none" stroke="#f1f1f3" stroke-width="2.600" stroke-linecap="round" stroke-linejoin="miter"/>
  <path d="M2036.500 11 H2039.800 V17.500 L2036.500 14.600 Z" fill="#f1f1f3"/>
  <path d="M2018 21.800 L2029 12 L2040 21.800 V34.500 Q2040 36.800 2037.700 36.800 H2020.300 Q2018 36.800 2018 34.500 Z" fill="#f1f1f3"/>
  <rect x="2026.200" y="27.100" width="5.600" height="7.600" fill="#606163"/>
  <!-- rotate -->
  <rect x="2108.100" y="18.800" width="22" height="20.200" rx="4" fill="#f1f1f3"/>
  <path d="M2103.400 23.300 Q2102 13.800 2112.500 12" fill="none" stroke="#f1f1f3" stroke-width="2.600" stroke-linecap="round"/>
  <polygon points="2111.700,7 2117.300,12 2111.700,16.800" fill="#f1f1f3" stroke="#f1f1f3" stroke-width="1" stroke-linejoin="round"/>
</svg>
<span class="t" style="left:1593.09px;top:10.30px;font-size:26.7px;color:#b9b9bb;letter-spacing:-0.383px;">iPhone 12 – 14.4</span>
<span class="t" style="left:1547.30px;top:145.37px;font-size:26.5px;color:transparent;letter-spacing:-0.912px;">11:10</span>
<span class="t" style="left:1695.86px;top:381.51px;font-size:65.2px;color:#fff;letter-spacing:0.841px;transform:scaleY(1.028);transform-origin:0 84.65%;">I Am Rich</span>

</div>
</body></html>
